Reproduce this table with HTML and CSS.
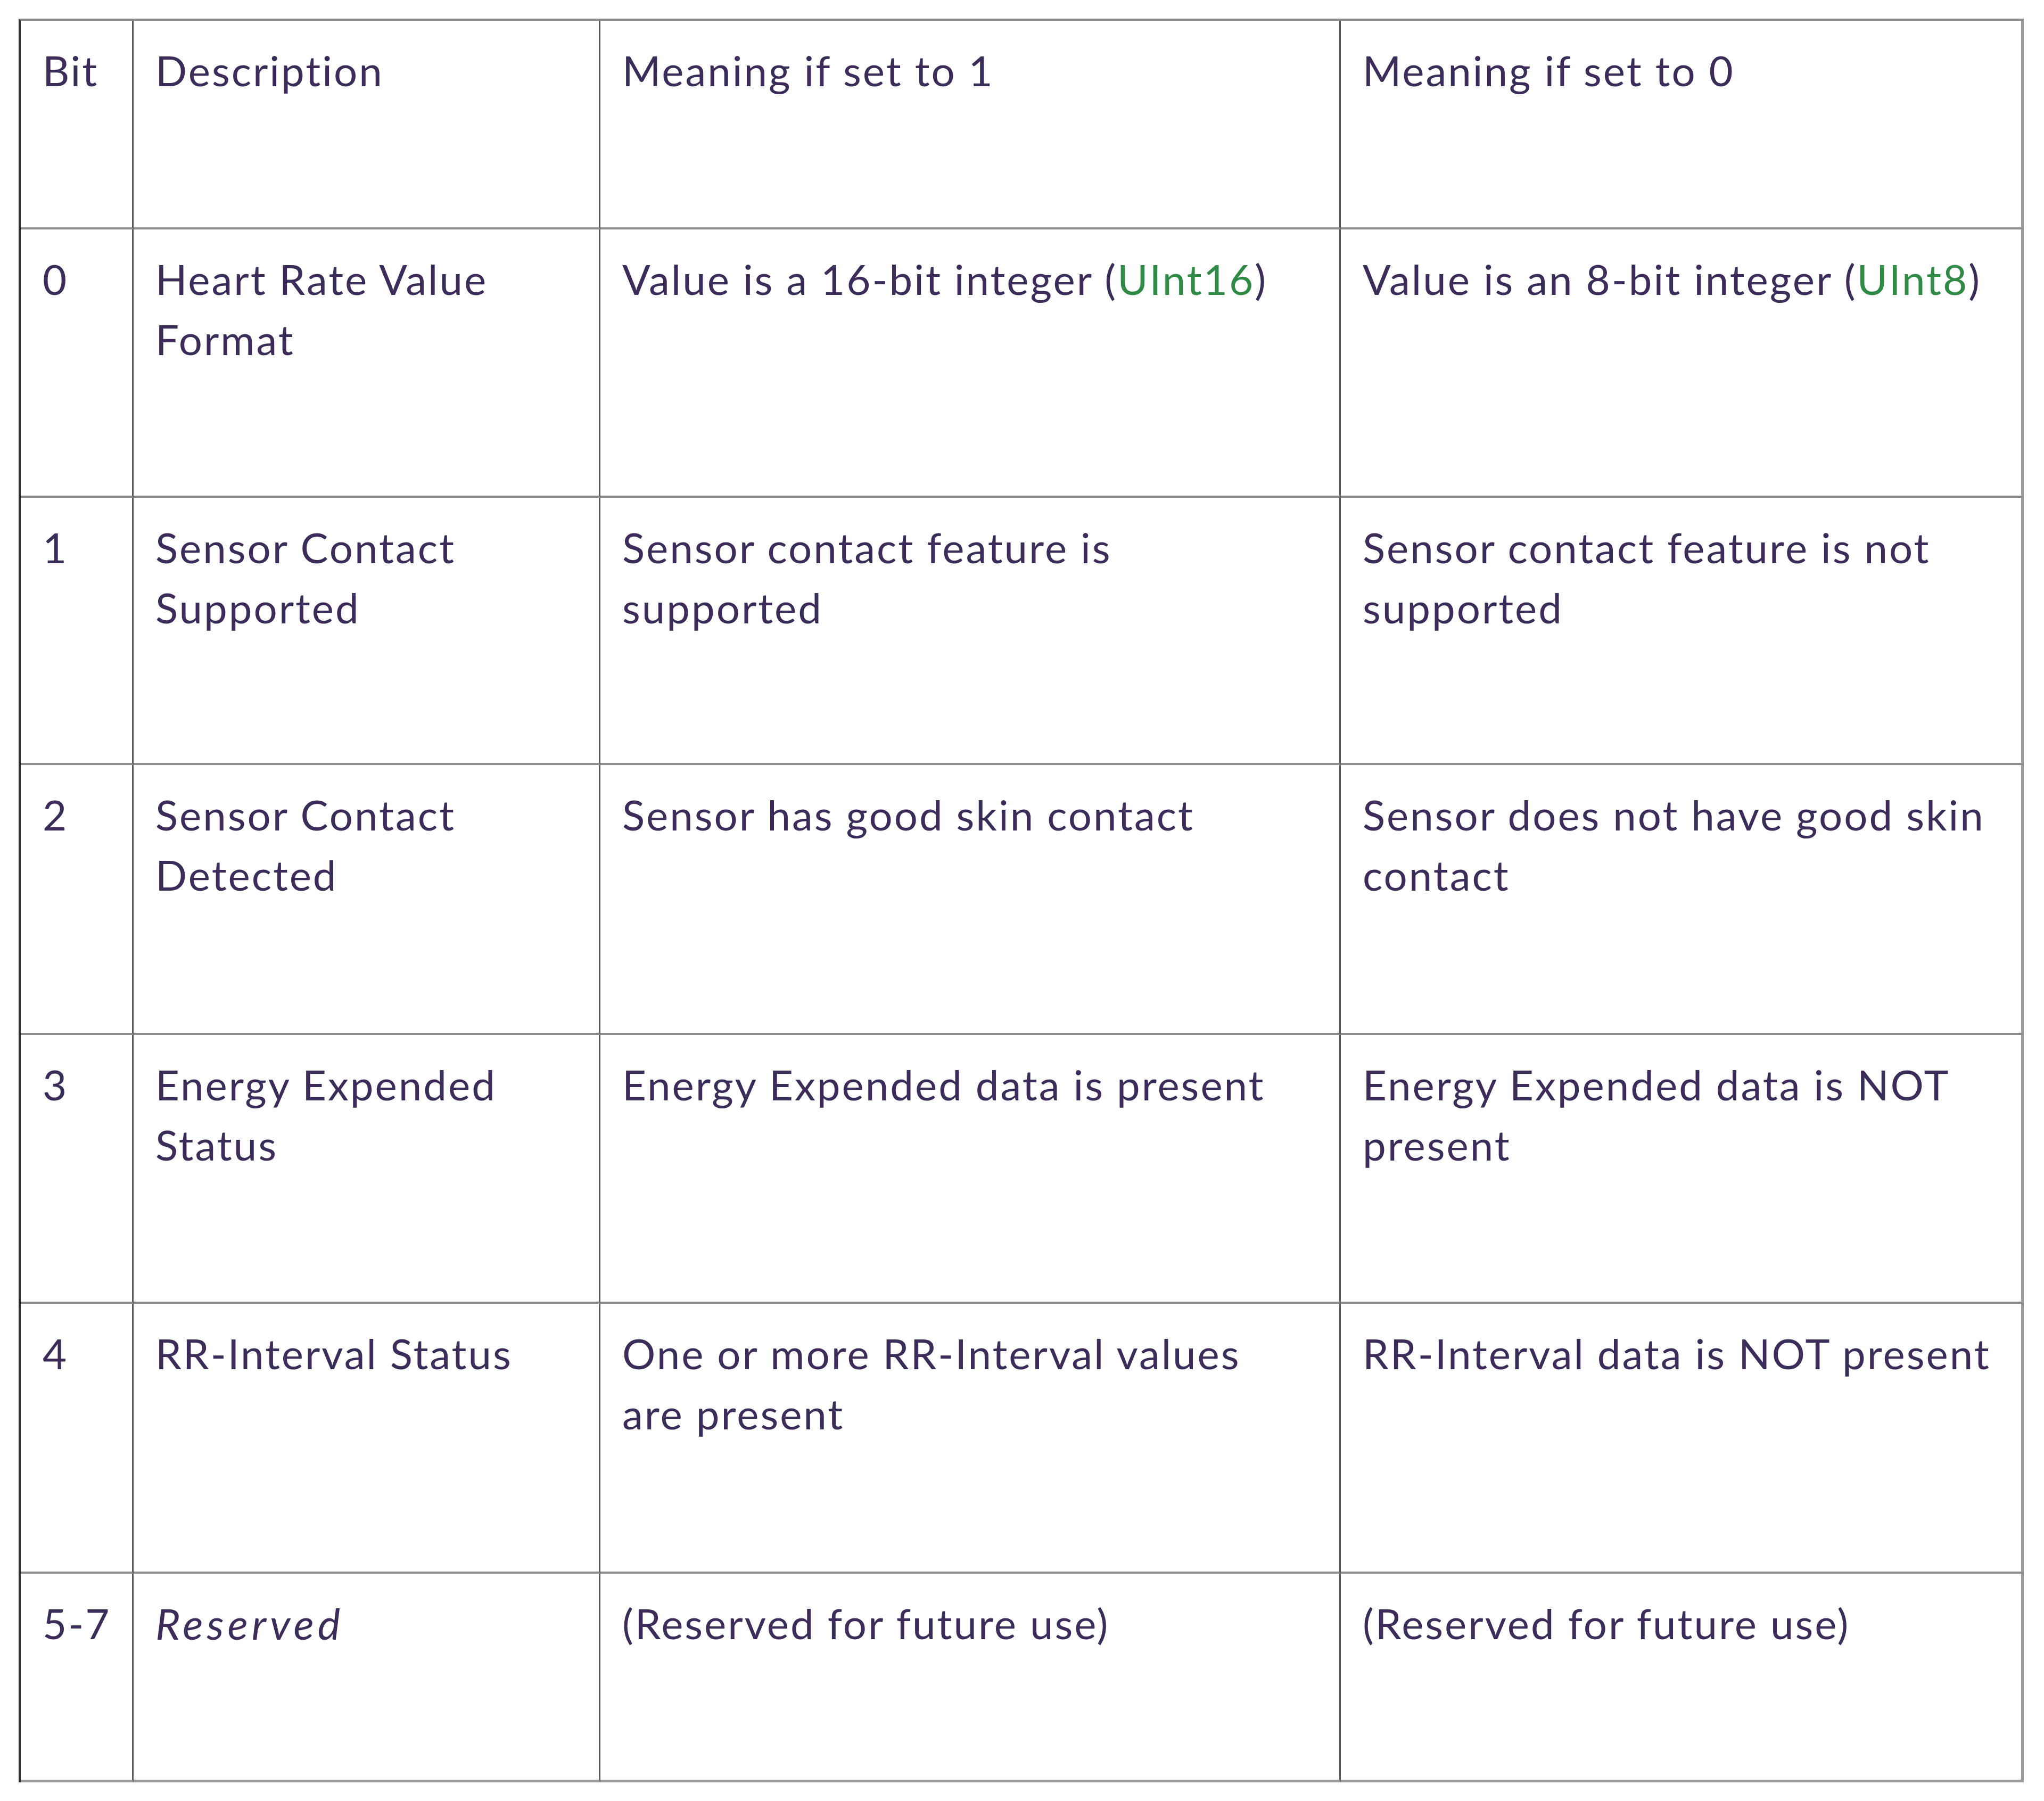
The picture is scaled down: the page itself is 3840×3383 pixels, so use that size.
FILE: index.html
```html
<!DOCTYPE html>
<html lang="en">
<head>
<meta charset="utf-8">
<title>Heart Rate Flags</title>
<link rel="stylesheet" href="styles.css">
</head>
<body>
<div class="table">
  <div class="cell c0 r-head">Bit</div>
  <div class="cell c1 r-head">Description</div>
  <div class="cell c2 r-head">Meaning if set to 1</div>
  <div class="cell c3 r-head">Meaning if set to 0</div>

  <div class="cell c0">0</div>
  <div class="cell c1">Heart Rate Value<br>Format</div>
  <div class="cell c2">Value is a 16-bit integer (<span class="code">UInt16</span>)</div>
  <div class="cell c3">Value is an 8-bit integer (<span class="code">UInt8</span>)</div>

  <div class="cell c0">1</div>
  <div class="cell c1">Sensor Contact<br>Supported</div>
  <div class="cell c2">Sensor contact feature is<br>supported</div>
  <div class="cell c3">Sensor contact feature is not<br>supported</div>

  <div class="cell c0">2</div>
  <div class="cell c1">Sensor Contact<br>Detected</div>
  <div class="cell c2">Sensor has good skin contact</div>
  <div class="cell c3">Sensor does not have good skin<br>contact</div>

  <div class="cell c0">3</div>
  <div class="cell c1">Energy Expended<br>Status</div>
  <div class="cell c2">Energy Expended data is present</div>
  <div class="cell c3">Energy Expended data is NOT<br>present</div>

  <div class="cell c0">4</div>
  <div class="cell c1">RR-Interval Status</div>
  <div class="cell c2">One or more RR-Interval values<br>are present</div>
  <div class="cell c3">RR-Interval data is NOT present</div>

  <div class="cell c0 last">5-7</div>
  <div class="cell c1 last"><em class="reserved">Reserved</em></div>
  <div class="cell c2 last">(Reserved for future use)</div>
  <div class="cell c3 last">(Reserved for future use)</div>
</div>
</body>
</html>
```
FILE: styles.css
```css
html, body {
  margin: 0;
  padding: 0;
  background: #ffffff;
}

body {
  padding: 35px 0 0 35px;
  font-family: "Lato", "Noto Sans", sans-serif;
  color: #3b2c5a;
}

.table {
  display: grid;
  grid-template-columns: 212px 877px 1391px 1283px;
  grid-template-rows: 392px 504px 502px 507px 505px 507px 392px;
  width: max-content;
  border-top: 4px solid #8c8c8c;
  border-left: 4px solid #2a2a2a;
}

.cell {
  box-sizing: border-box;
  border-right: 3px solid #5a5a5a;
  border-bottom: 4px solid #8c8c8c;
  padding: 37px 30px 0 41px;
  font-size: 78px;
  letter-spacing: 3px;
  line-height: 113px;
  white-space: nowrap;
}

.c3 {
  border-right: 5px solid #9a9a9a;
}

.last {
  border-bottom: 5px solid #9a9a9a;
}

.code {
  color: #2e8a45;
}

.reserved {
  font-style: italic;
  font-size: 80px;
  letter-spacing: 7px;
}
```
